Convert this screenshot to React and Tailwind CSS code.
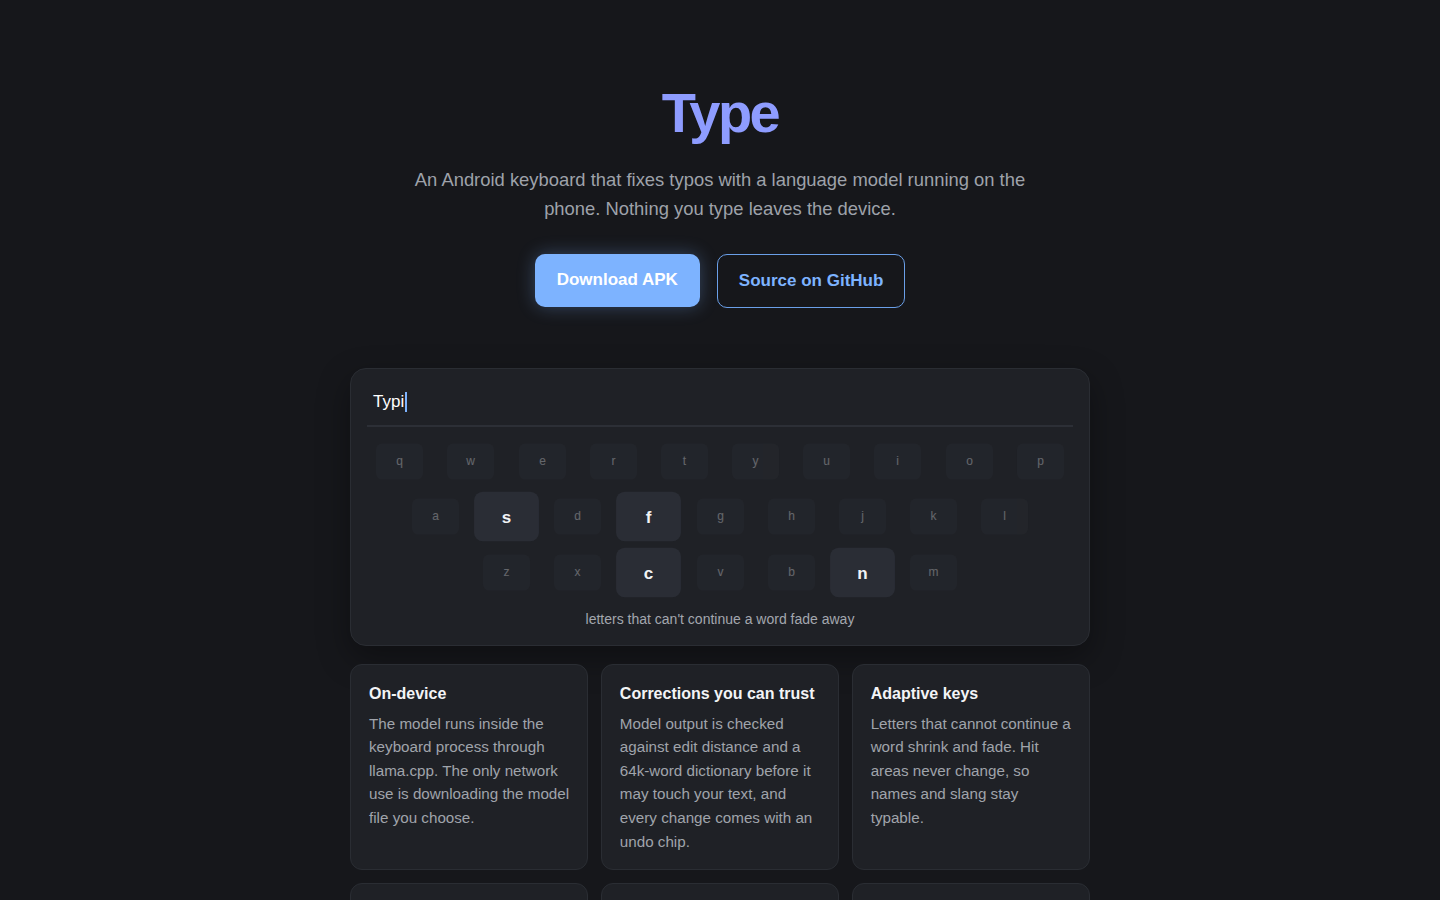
import React from "react";

const rows = [
  ["q", "w", "e", "r", "t", "y", "u", "i", "o", "p"],
  ["a", "s", "d", "f", "g", "h", "j", "k", "l"],
  ["z", "x", "c", "v", "b", "n", "m"],
];

// letters that can still continue "Typi"
const live = ["s", "f", "c", "n"];

const features = [
  {
    title: "On-device",
    body: "The model runs inside the keyboard process through llama.cpp. The only network use is downloading the model file you choose.",
  },
  {
    title: "Corrections you can trust",
    body: "Model output is checked against edit distance and a 64k-word dictionary before it may touch your text, and every change comes with an undo chip.",
  },
  {
    title: "Adaptive keys",
    body: "Letters that cannot continue a word shrink and fade. Hit areas never change, so names and slang stay typable.",
  },
  {
    title: "Small models",
    body: "Pick a compact model that fits your phone. Downloads are resumable and checked before use.",
  },
  {
    title: "Open source",
    body: "Every line of the keyboard is on GitHub. Build the APK yourself if you prefer.",
  },
  {
    title: "No telemetry",
    body: "No analytics, no crash reporting, no accounts. What you type stays yours.",
  },
];

function Key({ letter }) {
  const on = live.includes(letter);
  return (
    <div
      className={
        on
          ? "w-[59px] h-[45px] rounded-lg bg-[#2a2d35] flex items-center justify-center text-[15.5px] font-semibold text-[#f2f3f5] scale-110"
          : "w-[59px] h-[45px] rounded-lg bg-[#2a2d35] flex items-center justify-center text-[15px] text-[#e5e7eb] scale-80 opacity-35"
      }
    >
      {letter}
    </div>
  );
}

export default function App() {
  return (
    <div className="min-h-screen bg-[#16171b] font-['Liberation_Sans',Arial,sans-serif] text-[#e5e7eb]">
      <main className="max-w-[740px] mx-auto pt-[82px] pb-16">
        <header className="flex flex-col items-center text-center">
          <h1 className="text-[56px] leading-[1.1] font-bold tracking-[-0.045em] text-[#8e9cff]">Type</h1>
          <p className="mt-[21px] max-w-[640px] text-[18.4px] leading-[29px] text-[#9ea2aa]">
            An Android keyboard that fixes typos with a language model running on the phone. Nothing you type leaves the device.
          </p>
          <div className="mt-[31px] flex gap-[17px]">
            <a href="#" className="h-[53px] px-[22px] flex items-center rounded-[10px] bg-[#7db3ff] text-white text-[17px] font-bold shadow-[0_0_18px_rgba(125,179,255,0.3)]">
              Download APK
            </a>
            <a href="#" className="h-[54px] px-[21px] flex items-center rounded-[10px] border border-[#6a9fe8] text-[#7db3ff] text-[17px] font-bold">
              Source on GitHub
            </a>
          </div>
        </header>

        <section className="mt-[60px] rounded-2xl border border-[#2a2d33] bg-[#1f2126] p-4 shadow-[0_12px_32px_rgba(0,0,0,0.35)]">
          <div className="px-[6px] pb-[6px] border-b-2 border-[#2c2f36] text-[17px] leading-[34px] text-white flex items-center">
            Typi<span className="ml-[1px] inline-block w-[2px] h-[20px] bg-[#7db3ff]"></span>
          </div>
          <div className="mt-[12px] flex flex-col gap-[10.5px]">
            {rows.map((row, i) => (
              <div key={i} className="flex justify-center gap-[12.2px]">
                {row.map((l) => (
                  <Key key={l} letter={l} />
                ))}
              </div>
            ))}
          </div>
          <p className="mt-[14px] text-center text-[14px] leading-5 text-[#a3a7ae]">letters that can't continue a word fade away</p>
        </section>

        <section className="mt-[18px] grid grid-cols-3 gap-[12.5px]">
          {features.map((f) => (
            <div key={f.title} className="rounded-xl border border-[#2a2d33] bg-[#1f2126] px-[18px] pt-[17px] pb-[16px] min-h-[205px]">
              <h3 className="text-[16px] leading-6 font-bold text-[#f3f4f6]">{f.title}</h3>
              <p className="mt-[6px] text-[15.2px] leading-[23.6px] text-[#a0a4ab]">{f.body}</p>
            </div>
          ))}
        </section>
      </main>
    </div>
  );
}
